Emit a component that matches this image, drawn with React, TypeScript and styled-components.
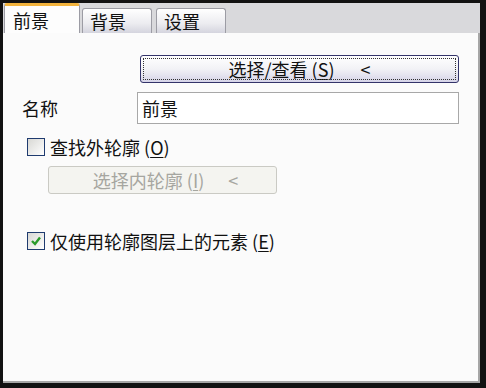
import React from 'react';
import styled, { createGlobalStyle } from 'styled-components';

const GlobalStyle = createGlobalStyle`
  html, body {
    margin: 0;
    padding: 0;
    background: #111;
  }
  body {
    font-family: "Noto Sans CJK SC", "Liberation Sans", sans-serif;
  }
`;

const Frame = styled.div`
  width: 486px;
  height: 388px;
  box-sizing: border-box;
  padding: 3px 6px 5px 3px;
  background: #121212;
  display: flex;
  flex-direction: column;
`;

const TabStrip = styled.div`
  height: 30px;
  background: #d9d9dc;
  display: flex;
  align-items: flex-end;
  padding-left: 1px;
  gap: 2px;
`;

const Tab = styled.div<{ $active?: boolean }>`
  box-sizing: border-box;
  width: ${(p) => (p.$active ? '76px' : '70px')};
  height: ${(p) => (p.$active ? '30px' : '25px')};
  padding-left: ${(p) => (p.$active ? '8px' : '7px')};
  display: flex;
  align-items: center;
  font-size: 18px;
  line-height: 1;
  color: #111;
  border: 1px solid #9c9ca4;
  border-bottom: none;
  border-radius: 3px 3px 0 0;
  background: ${(p) =>
    p.$active ? '#fdfdfd' : 'linear-gradient(#ffffff, #ececf0 60%, #d4d4de)'};
  border-top: ${(p) => (p.$active ? '3px solid #f2b33d' : '1px solid #9c9ca4')};
  margin-right: ${(p) => (p.$active ? '0' : '2px')};
`;

const Panel = styled.div`
  flex: 1;
  background: #fbfbfb;
  border-right: 2px solid #a6a6a6;
  border-bottom: 2px solid #a6a6a6;
  padding: 22px 19px 0 19px;
  display: flex;
  flex-direction: column;
`;

const PushButton = styled.button<{ $disabled?: boolean }>`
  box-sizing: border-box;
  font-family: inherit;
  font-size: 18px;
  line-height: 1;
  height: 28px;
  border-radius: 3px;
  display: flex;
  align-items: center;
  justify-content: center;
  gap: 26px;
  padding: 0;
  color: ${(p) => (p.$disabled ? '#a6a6a0' : '#111')};
  border: 1px solid ${(p) => (p.$disabled ? '#cacac4' : '#34346a')};
  background: ${(p) =>
    p.$disabled ? '#f4f4f0' : 'linear-gradient(#ffffff, #f2f2f6 50%, #d6d4e8)'};
  outline: ${(p) => (p.$disabled ? 'none' : '1px dotted #333')};
  outline-offset: -4px;
`;

const TopButton = styled(PushButton)`
  margin-left: 118px;
  width: 319px;
`;

const InnerButton = styled(PushButton)`
  margin-left: 26px;
  width: 229px;
  gap: 24px;
  padding-left: 6px;
`;

const Row = styled.div`
  display: flex;
  align-items: center;
  margin-top: 9px;
`;

const Label = styled.span`
  font-size: 18px;
  color: #111;
  width: 115px;
`;

const TextInput = styled.div`
  box-sizing: border-box;
  width: 322px;
  height: 32px;
  border: 1px solid #a8a8a8;
  background: #fff;
  display: flex;
  align-items: center;
  padding-left: 4px;
  font-size: 18px;
  color: #111;
`;

const CheckRow = styled.label<{ $gap: number }>`
  display: flex;
  align-items: center;
  gap: 5px;
  margin-top: ${(p) => p.$gap}px;
  margin-left: 5px;
  font-size: 18px;
  line-height: 1;
  color: #111;
  height: 20px;
`;

const Box = styled.span`
  box-sizing: border-box;
  width: 18px;
  height: 18px;
  border: 1px solid #1f3b6f;
  background: linear-gradient(135deg, #d8d8d4, #ffffff);
  display: flex;
  align-items: center;
  justify-content: center;
`;

const Key = styled.span`
  text-decoration: underline;
  text-underline-offset: 2px;
`;

function CheckBox({ checked }: { checked?: boolean }) {
  return (
    <Box>
      {checked ? (
        <svg width="12" height="12" viewBox="0 0 12 12">
          <path d="M2 6 L5 9 L10 2.5" fill="none" stroke="#2a9a2a" strokeWidth="2.4" />
        </svg>
      ) : null}
    </Box>
  );
}

export default function App() {
  return (
    <>
      <GlobalStyle />
      <Frame>
        <TabStrip>
          <Tab $active>前景</Tab>
          <Tab>背景</Tab>
          <Tab>设置</Tab>
        </TabStrip>
        <Panel>
          <TopButton>
            <span>
              选择/查看 (<Key>S</Key>)
            </span>
            <span>&lt;</span>
          </TopButton>
          <Row>
            <Label>名称</Label>
            <TextInput>前景</TextInput>
          </Row>
          <CheckRow $gap={13}>
            <CheckBox />
            <span>
              查找外轮廓 (<Key>O</Key>)
            </span>
          </CheckRow>
          <Row>
            <InnerButton $disabled>
              <span>
                选择内轮廓 (<Key>I</Key>)
              </span>
              <span>&lt;</span>
            </InnerButton>
          </Row>
          <CheckRow $gap={37}>
            <CheckBox checked />
            <span>
              仅使用轮廓图层上的元素 (<Key>E</Key>)
            </span>
          </CheckRow>
        </Panel>
      </Frame>
    </>
  );
}
